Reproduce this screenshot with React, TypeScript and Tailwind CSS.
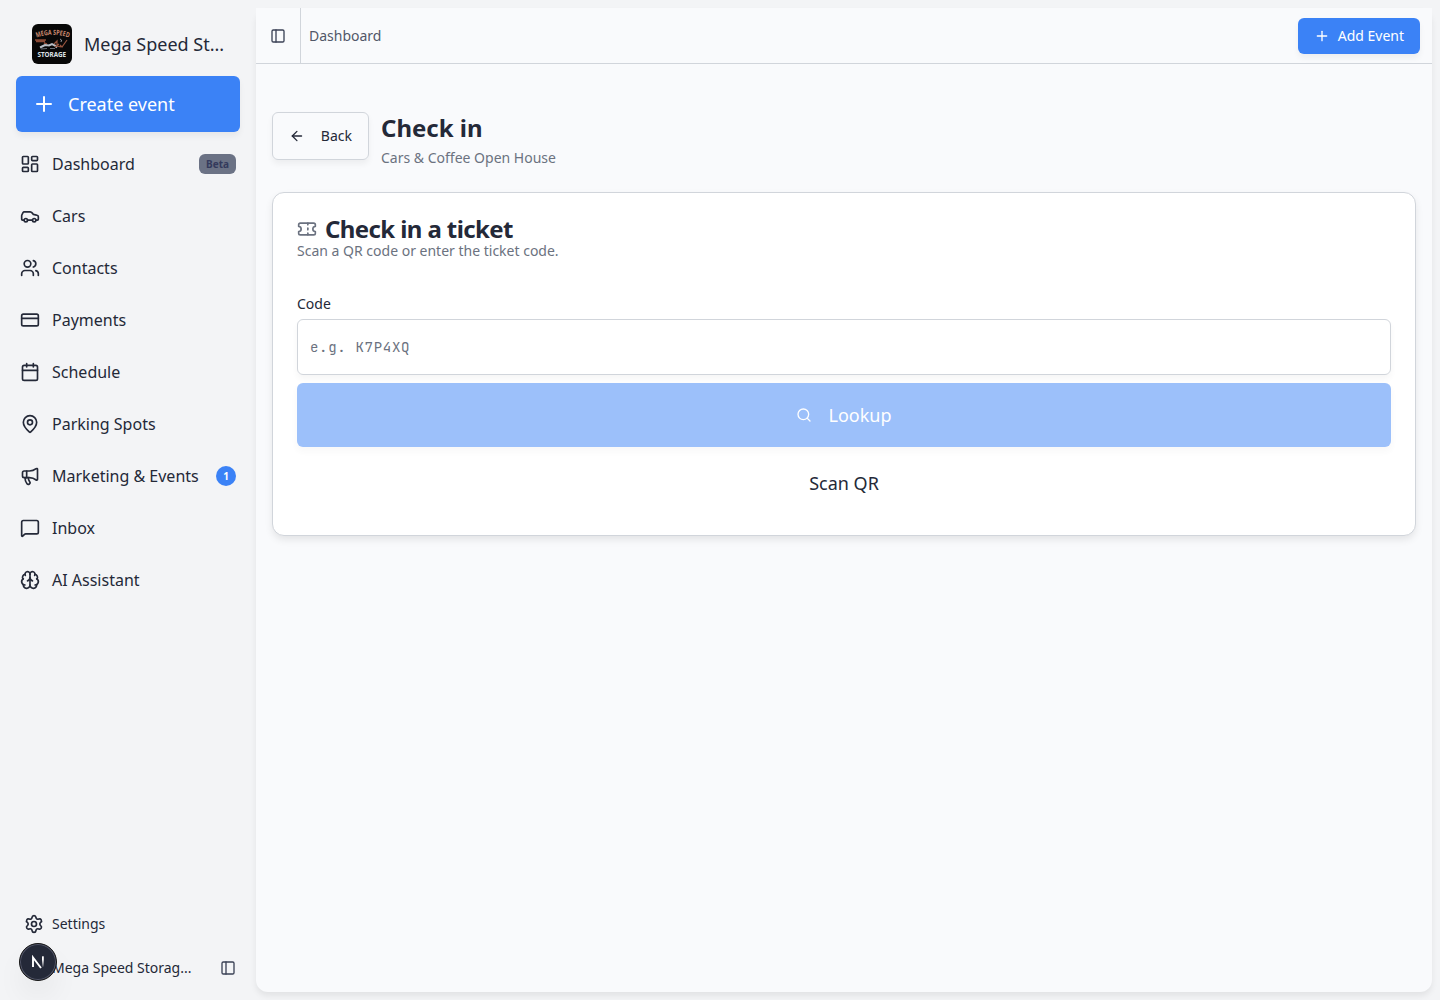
import React from 'react';
import {
    ArrowLeft,
    Brain,
    Calendar,
    CreditCard,
    LayoutDashboard,
    MapPin,
    MessageSquare,
    PanelLeft,
    Plus,
    Search,
    Settings,
    Ticket,
    Users,
} from 'lucide-react';

type IconType = React.ComponentType<{ className?: string; strokeWidth?: number }>;

// --- Icons ---

const CarIcon: IconType = ({ className }) => (
    <svg viewBox="0 0 24 24" fill="none" stroke="currentColor" strokeWidth={2} strokeLinecap="round" strokeLinejoin="round" className={className}>
        <path d="M19 17h2c.6 0 1-.4 1-1v-3c0-.9-.7-1.7-1.5-1.9C18.700 10.600 16 10 16 10s-1.300-1.400-2.200-2.300c-.5-.4-1.100-.7-1.800-.7H5c-.6 0-1.100.4-1.400.9l-1.400 2.900A3.700 3.700 0 0 0 2 12v4c0 .6.4 1 1 1h2" />
        <circle cx="7" cy="17" r="2" />
        <path d="M9 17h6" />
        <circle cx="17" cy="17" r="2" />
    </svg>
);

const MegaphoneIcon: IconType = ({ className }) => (
    <svg viewBox="0 0 24 24" fill="none" stroke="currentColor" strokeWidth={2} strokeLinecap="round" strokeLinejoin="round" className={className}>
        <path d="M11 6a13 13 0 0 0 8.400-2.800A1 1 0 0 1 21 4v12a1 1 0 0 1-1.600.8A13 13 0 0 0 11 14H5a2 2 0 0 1-2-2V8a2 2 0 0 1 2-2z" />
        <path d="M6 14a12 12 0 0 0 2.400 7.200 2 2 0 0 0 3.200-2.400A8 8 0 0 1 10 14" />
        <path d="M8 6v8" />
    </svg>
);

const BrandLogo = () => (
    <svg viewBox="0 0 40 40" className="size-10 shrink-0 rounded-md bg-[#080808]">
        <path id="arch" d="M4.500 13.500Q20 8 36.500 13.500" fill="none" />
        <text fill="#c98a70" fontSize="7" fontWeight="700" fontFamily="Noto Sans, sans-serif">
            <textPath href="#arch" textLength="33" lengthAdjust="spacingAndGlyphs">MEGA SPEED</textPath>
        </text>
        <path d="M3 16h11M4 17.500h9M12 19l3 1" stroke="#8a4a35" strokeWidth="1.500" />
        <path d="M8 23.500l5-2.500 4 .5 3-1.500 3 1.500 2 2" stroke="#b9bec5" strokeWidth="2" fill="none" />
        <path d="M9 25l6-.5M18 24.500h5" stroke="#686d75" strokeWidth="1.200" />
        <path d="M22 20l3-3v5l4 1M28 21l2 2 5-7M23 23l4-3" stroke="#95533d" strokeWidth="1.200" fill="none" />
        <path d="M28 15l1.500 1-.5 2" stroke="#b9bec5" strokeWidth=".8" fill="none" />
        <text x="5.500" y="33" fill="#dfe3e8" fontSize="7" fontWeight="700" fontFamily="Noto Sans, sans-serif" textLength="28.500" lengthAdjust="spacingAndGlyphs">STORAGE</text>
    </svg>
);

// --- Sidebar ---

const navItems: { label: string; icon: IconType; beta?: boolean; count?: number }[] = [
    { label: 'Dashboard', icon: LayoutDashboard, beta: true },
    { label: 'Cars', icon: CarIcon },
    { label: 'Contacts', icon: Users },
    { label: 'Payments', icon: CreditCard },
    { label: 'Schedule', icon: Calendar },
    { label: 'Parking Spots', icon: MapPin },
    { label: 'Marketing & Events', icon: MegaphoneIcon, count: 1 },
    { label: 'Inbox', icon: MessageSquare },
    { label: 'AI Assistant', icon: Brain },
];

const Sidebar = () => (
    <aside className="flex w-64 shrink-0 flex-col px-4 pt-6 pb-2">
        <div className="flex h-10 items-center gap-3 pl-4">
            <BrandLogo />
            <span className="text-lg whitespace-nowrap">Mega Speed St...</span>
        </div>

        <button className="mt-3 flex h-14 shrink-0 items-center gap-3 rounded-md bg-[#3b82f6] px-4 text-left text-lg text-white shadow-[0_4px_6px_rgba(0,0,0,0.05)]">
            <Plus className="size-6" />
            Create event
        </button>

        <nav className="mt-2 flex flex-col gap-1">
            {navItems.map(({ label, icon: Icon, beta, count }) => (
                <a key={label} className="flex h-12 items-center gap-3 px-1">
                    <Icon className="size-5 shrink-0" />
                    <span className="flex-1 whitespace-nowrap">{label}</span>
                    {beta && (
                        <span className="flex h-5 w-[37px] items-center justify-center rounded-md bg-[#6b7285] text-[10px] font-bold text-[#343a5c]">Beta</span>
                    )}
                    {count && (
                        <span className="flex size-5 items-center justify-center rounded-full bg-[#3b82f6] text-[10px] font-bold text-white">{count}</span>
                    )}
                </a>
            ))}
        </nav>

        <div className="relative mt-auto text-sm">
            <a className="flex h-8 items-center gap-2 pl-2">
                <Settings className="size-5" />
                Settings
            </a>
            <div className="mt-1 flex h-12 items-center pl-9">
                <span className="whitespace-nowrap">Mega Speed Storag...</span>
                <PanelLeft className="mr-1 ml-auto size-4 text-[#3b4256]" />
            </div>
            {/* Dev tools bubble floats over the account row */}
            <div className="absolute top-[35px] left-[3px] flex size-[38px] items-center justify-center rounded-full border border-[#171717] bg-[#242938] shadow-[inset_0_0_0_1px_#53576a,0_16px_32px_-8px_rgba(0,0,0,0.14)]">
                <svg viewBox="0 0 14 14" className="size-3.5" fill="none">
                    <defs>
                        <linearGradient id="stem" x1="0" y1="0" x2="0" y2="1">
                            <stop offset="0.3" stopColor="#fff" />
                            <stop offset="1" stopColor="#fff" stopOpacity="0.15" />
                        </linearGradient>
                    </defs>
                    <path d="M2 12V2.500L10 13" stroke="#fff" strokeWidth="1.900" />
                    <rect x="11" y="1.300" width="1.800" height="10.500" fill="url(#stem)" />
                </svg>
            </div>
        </div>
    </aside>
);

// --- Check in ---

const CheckInCard = () => (
    <section className="mt-6 flex flex-col rounded-xl border border-[#d1d5db] bg-white p-6 shadow-[0_4px_8px_-1px_rgba(0,0,0,0.1)]">
        <h2 className="flex items-center gap-2 text-2xl leading-none font-bold tracking-tight">
            <Ticket className="size-5 text-[#6b7280]" />
            Check in a ticket
        </h2>
        <p className="text-sm text-[#6b7280]">Scan a QR code or enter the ticket code.</p>

        <label htmlFor="code" className="mt-9 text-sm leading-[14px]">Code</label>
        <input
            id="code"
            placeholder="e.g. K7P4XQ"
            className="mt-2 h-14 rounded-md border border-[#d1d5db] px-3 font-['JetBrains_Mono','Noto_Sans_Mono','DejaVu_Sans_Mono',monospace] text-sm tracking-wider shadow-[0_4px_6px_rgba(0,0,0,0.04)] placeholder:text-[#6b7280]"
        />
        <button className="mt-2 flex h-16 items-center justify-center gap-4 rounded-md bg-[#3b82f6] text-lg text-white opacity-50 shadow-[0_4px_6px_rgba(0,0,0,0.05)]">
            <Search className="size-4" />
            Lookup
        </button>
        <button className="mt-2 h-14 text-lg">Scan QR</button>
    </section>
);

export default function App() {
    return (
        <div className="flex h-screen overflow-hidden bg-[#f3f4f6] font-['Noto_Sans',sans-serif] text-[#242938]">
            <Sidebar />
            <main className="my-2 mr-2 flex min-w-0 flex-1 flex-col rounded-xl bg-[#f9fafc] shadow-[0_4px_6px_rgba(0,0,0,0.07)]">
                <header className="flex h-14 shrink-0 items-center border-b border-[#d1d5db] bg-[#f9fafc] pr-3 text-sm">
                    <div className="flex h-full w-[45px] items-center justify-center border-r border-[#d1d5db]">
                        <PanelLeft className="size-4 text-[#3b4256]" />
                    </div>
                    <span className="ml-2 text-[#515768]">Dashboard</span>
                    <button className="ml-auto flex h-9 items-center gap-2 rounded-md bg-[#3b82f6] px-4 text-white shadow-[0_4px_6px_rgba(0,0,0,0.05)]">
                        <Plus className="size-4" />
                        Add Event
                    </button>
                </header>

                <div className="px-4 pt-12">
                    <div className="flex h-14 gap-3">
                        <button className="flex h-12 w-[97px] items-center gap-4 rounded-md border border-[#d1d5db] px-4 text-sm shadow-[0_4px_6px_rgba(0,0,0,0.05)]">
                            <ArrowLeft className="size-4" />
                            Back
                        </button>
                        <div>
                            <h1 className="text-2xl font-bold">Check in</h1>
                            <p className="mt-1 text-sm text-[#6b7280]">Cars &amp; Coffee Open House</p>
                        </div>
                    </div>
                    <CheckInCard />
                </div>
            </main>
        </div>
    );
}
